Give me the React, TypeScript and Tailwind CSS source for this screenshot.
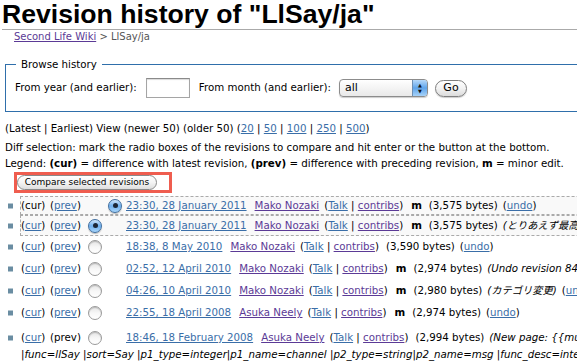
import React from "react";

type Row = {
    curLink: boolean;
    prevLink: boolean;
    radio: 'old' | 'diff';
    checked?: boolean;
    selected?: boolean;
    date: string;
    user: string;
    minor: boolean;
    bytes: string;
    comment?: string;
    undo?: boolean;
    h: string;
};

const rows: Row[] = [
    { curLink: false, prevLink: true, radio: 'diff', checked: true, selected: true, date: "23:30, 28 January 2011", user: "Mako Nozaki", minor: true, bytes: "3,575", undo: true, h: "h-[19px]" },
    { curLink: true, prevLink: true, radio: 'old', checked: true, selected: true, date: "23:30, 28 January 2011", user: "Mako Nozaki", minor: true, bytes: "3,575", comment: "(とりあえず最高品質にまで翻訳完了)", h: "h-[21px]" },
    { curLink: true, prevLink: true, radio: 'old', date: "18:38, 8 May 2010", user: "Mako Nozaki", minor: false, bytes: "3,590", undo: true, h: "h-[22px]" },
    { curLink: true, prevLink: true, radio: 'old', date: "02:52, 12 April 2010", user: "Mako Nozaki", minor: true, bytes: "2,974", comment: "(Undo revision 848123 by Mako Nozaki)", h: "h-[22px]" },
    { curLink: true, prevLink: true, radio: 'old', date: "04:26, 10 April 2010", user: "Mako Nozaki", minor: true, bytes: "2,980", comment: "(カテゴリ変更)", undo: true, h: "h-[22px]" },
    { curLink: true, prevLink: true, radio: 'old', date: "22:55, 18 April 2008", user: "Asuka Neely", minor: true, bytes: "2,974", undo: true, h: "h-[22px]" },
    { curLink: true, prevLink: false, radio: 'old', date: "18:46, 18 February 2008", user: "Asuka Neely", minor: false, bytes: "2,994", comment: "(New page: {{multi-lang}}{{LSL_Function/chat|channel|msg}}{{LSL_Function", h: "h-[27px]" },
];

const link = "text-[#3a6ea8] underline";
const visited = "text-[#5b3a96] underline";

function Radio({ checked = false }: { checked?: boolean }) {
    if (checked) {
        return (
            <span className="inline-flex h-[14px] w-[14px] shrink-0 items-center justify-center rounded-full border border-[#3f6e9f] bg-gradient-to-b from-[#cfe6fb] via-[#6fb0ef] to-[#a9d6fb] shadow-[0_1px_1px_rgba(0,0,0,0.25)]">
                <span className="h-[5px] w-[5px] rounded-full bg-[#1b2636]" />
            </span>
        );
    }
    return (
        <span className="inline-block h-[14px] w-[14px] shrink-0 rounded-full border border-[#9a9a9a] bg-gradient-to-b from-[#e4e4e4] via-[#f7f7f7] to-[#ffffff] shadow-[inset_0_1px_1px_rgba(0,0,0,0.2)]" />
    );
}

function HistoryRow({ row }: { row: Row }) {
    return (
        <li className={`relative ${row.h} flex items-center whitespace-nowrap border border-dashed ${row.selected ? 'border-[#aaa] bg-[#f9f9f9]' : 'border-transparent'}`}>
            <span className="absolute left-[-13px] top-1/2 h-[5px] w-[5px] -translate-y-1/2 bg-[#6a8da2]" />
            <span className="w-[29px] shrink-0">({row.curLink ? <span className={link}>cur</span> : 'cur'})</span>
            <span className="w-[38px] shrink-0">({row.prevLink ? <span className={link}>prev</span> : 'prev'})</span>
            <span className="flex w-[20px] shrink-0">{row.radio === 'old' && <Radio checked={row.checked} />}</span>
            <span className="flex w-[18px] shrink-0">{row.radio === 'diff' && <Radio checked={row.checked} />}</span>
            <span className={`shrink-0 ${link}`}>{row.date}</span>
            <span className={`ml-[8px] shrink-0 ${visited}`}>{row.user}</span>
            <span className="ml-[5px] shrink-0">(<span className={link}>Talk</span> | <span className={visited}>contribs</span>)</span>
            {row.minor && <b className="ml-[8px] shrink-0">m</b>}
            <span className="ml-[7px] shrink-0">({row.bytes} bytes)</span>
            {row.comment && <i className="ml-[5px] shrink-0">{row.comment}</i>}
            {row.undo && <span className="ml-[5px] shrink-0">(<span className={link}>undo</span>)</span>}
        </li>
    );
}

const wrapLine = "|func=llSay |sort=Say |p1_type=integer|p1_name=channel |p2_type=string|p2_name=msg |func_desc=integer}}";

export default function App() {
    return (
        <div className="h-[362px] w-[577px] overflow-hidden bg-white font-['DejaVu_Sans','Noto_Sans_CJK_JP',sans-serif] text-[10.25px] text-black">
            <div className="w-[720px]">
                <h1 className="ml-[2px] border-b border-[#aaa] pb-px font-['Liberation_Sans',Arial,sans-serif] text-[26.6px] font-bold leading-[28px]">
                    Revision history of "LlSay/ja"
                </h1>
                <div className="pl-[14px] text-[10px] leading-[13px] text-[#555]">
                    <span className={visited}>Second Life Wiki</span> &gt; LlSay/ja
                </div>

                <fieldset className="ml-[5px] mt-[15px] border border-[#2f6fab] px-[8px] pb-[13px] pt-[7px]">
                    <legend className="ml-[2px] px-[5px] leading-[13px]">Browse history</legend>
                    <div className="flex items-center">
                        <span className="ml-[1px]">From year (and earlier):</span>
                        <span className="ml-[9px] h-[20px] w-[44px] border border-[#a5a5a5] border-t-[#8a8a8a] bg-white shadow-[inset_0_1px_1px_rgba(0,0,0,0.15)]" />
                        <span className="ml-[9px]">From month (and earlier):</span>
                        <span className="ml-[8px] flex h-[18px] w-[89px] overflow-hidden rounded-[4px] border border-[#8c8c8c] bg-gradient-to-b from-white to-[#e9e9e9] shadow-[0_1px_1px_rgba(0,0,0,0.2)]">
                            <span className="flex-1 pl-[5px] text-[11px] leading-[16px]">all</span>
                            <span className="flex w-[15px] flex-col items-center justify-center border-l border-[#6d8fb3] bg-gradient-to-b from-[#b6d9fa] via-[#5fa4ea] to-[#a6d2f8] text-[5px] leading-[6px] text-[#111]">
                                <span>▲</span>
                                <span>▼</span>
                            </span>
                        </span>
                        <span className="ml-[7px] flex h-[17px] w-[32px] items-center justify-center rounded-full border border-[#7f7f7f] bg-gradient-to-b from-white via-[#f2f2f2] to-[#dcdcdc] text-[11px] shadow-[0_1px_1px_rgba(0,0,0,0.2)]">
                            Go
                        </span>
                    </div>
                </fieldset>

                <p className="ml-[5px] mt-[8px] leading-[16px]">
                    (Latest | Earliest) View (newer 50) (older 50) (<span className={link}>20</span> | <span className={link}>50</span> | <span className={link}>100</span> | <span className={link}>250</span> | <span className={link}>500</span>)
                </p>
                <p className="ml-[5px] mt-[3px] leading-[16px]">
                    Diff selection: mark the radio boxes of the revisions to compare and hit enter or the button at the bottom.
                </p>
                <p className="ml-[5px] leading-[16px]">
                    Legend: <b>(cur)</b> = difference with latest revision, <b>(prev)</b> = difference with preceding revision, <b>m</b> = minor edit.
                </p>

                <div className="ml-[14px] mt-px inline-flex h-[21px] w-[158px] items-center border-[3px] border-[#ef5d4f]">
                    <span className="flex h-[15px] w-[140px] items-center justify-center rounded-full border border-[#8a8a8a] bg-gradient-to-b from-white via-[#f4f4f4] to-[#dedede] text-[9px] leading-[13px]">
                        Compare selected revisions
                    </span>
                </div>

                <ul className="ml-[20px] mt-[3px]">
                    {rows.map((row, i) => (
                        <HistoryRow key={i} row={row} />
                    ))}
                </ul>
                <div className="ml-[21px] mt-[-5px] whitespace-nowrap italic leading-[16px]">
                    {wrapLine}
                </div>
            </div>
        </div>
    );
}
